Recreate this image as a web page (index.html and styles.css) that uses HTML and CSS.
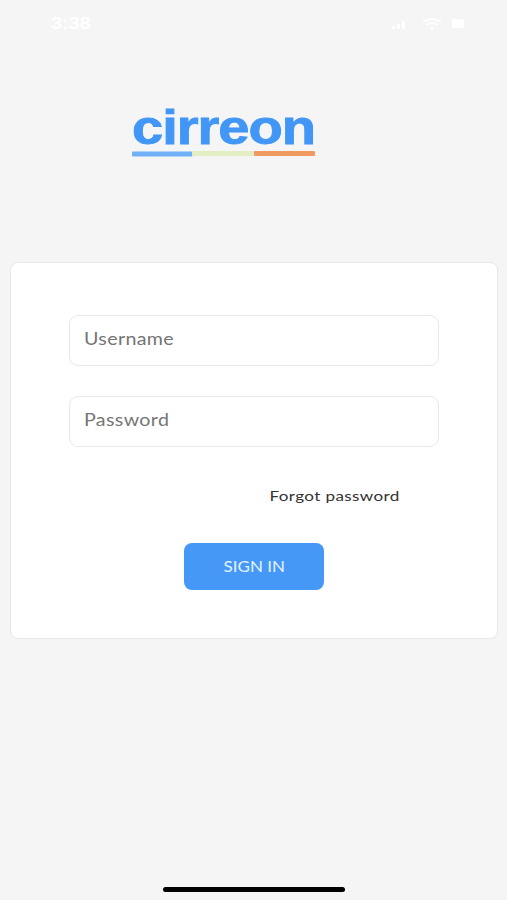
FILE: index.html
```html
<!DOCTYPE html>
<html lang="en">
<head>
    <meta charset="UTF-8">
    <meta name="viewport" content="width=device-width, initial-scale=1.0">
    <title>Cirreon Login</title>
    <link rel="stylesheet" href="styles.css">
</head>
<body>

    <!-- Status Bar -->
    <header class="status-bar">
        <span class="time">3:38</span>
        <svg class="status-icons" width="76" height="16" viewBox="0 0 76 16">
            <rect x="1" y="10" width="3" height="3"/>
            <rect x="6" y="8" width="3" height="5"/>
            <rect x="11" y="5" width="3" height="8"/>
            <path class="wifi" d="M32 6Q41 0 50 6M35 9Q41 5 47 9"/>
            <circle cx="41" cy="12" r="1.5"/>
            <rect x="61" y="3" width="12" height="9" rx="1.5"/>
        </svg>
    </header>

    <!-- Logo -->
    <div class="logo">
        <svg width="183" height="52" viewBox="0 0 183 52">
            <text class="logo-text" x="0" y="37" textLength="183" lengthAdjust="spacingAndGlyphs">cirreon</text>
            <rect x="0" y="44.5" width="61" height="5" rx="1" fill="#6fb0f6"/>
            <rect x="60" y="44" width="62" height="5" fill="#e3efc2"/>
            <rect x="122" y="44" width="61" height="5" rx="1" fill="#f19a5f"/>
        </svg>
    </div>

    <!-- Login Form -->
    <form class="login-card">
        <div class="field">
            <input type="text" placeholder="Username" aria-label="Username">
        </div>
        <div class="field">
            <input type="password" placeholder="Password" aria-label="Password">
        </div>
        <a class="forgot" href="#">Forgot password</a>
        <button type="submit"><span>SIGN IN</span></button>
    </form>

    <div class="home-indicator"></div>

</body>
</html>
```
FILE: styles.css
```css
* {
    box-sizing: border-box;
}

body {
    display: flex;
    flex-direction: column;
    height: 900px;
    margin: 0;
    padding: 0;
    overflow: hidden;
    font-family: Lato, "Open Sans", sans-serif;
    background-color: #f5f5f5;
}

.status-bar {
    display: flex;
    justify-content: space-between;
    align-items: center;
    height: 48px;
    padding: 0 40px 0 51px;
    color: #fff;
}

.time {
    font: bold 16px "Liberation Sans", sans-serif;
    transform: scaleX(1.24);
    transform-origin: left;
}

.status-icons {
    fill: #fff;
}

.wifi {
    fill: none;
    stroke: #fff;
    stroke-width: 2;
}

.logo {
    height: 214px;
    padding: 59px 0 0 132px;
}

.logo svg {
    display: block;
    overflow: visible;
}

.logo-text {
    font: bold 49px "Liberation Sans", sans-serif;
    letter-spacing: -0.9px;
    fill: #4296f5;
    stroke: #4296f5;
    stroke-width: 0.9;
}

.login-card {
    display: flex;
    flex-direction: column;
    align-items: center;
    width: 488px;
    height: 377px;
    margin-left: 10px;
    padding-top: 52px;
    background-color: #fff;
    border: 1.5px solid #e8e8e8;
    border-radius: 8px;
}

.field {
    width: 370px;
    height: 51px;
    margin-bottom: 30px;
    padding: 1px 14px 5px;
    border: 1.5px solid #e8e8e8;
    border-radius: 9px;
}

input {
    width: 285px;
    height: 100%;
    padding: 0;
    border: none;
    outline: none;
    background: none;
    font: 16.5px Lato, "Open Sans", sans-serif;
    letter-spacing: 0.3px;
    color: #333;
    transform: scaleX(1.19);
    transform-origin: left;
}

input::placeholder {
    color: #757575;
    opacity: 1;
}

.forgot {
    align-self: flex-end;
    margin: 9px 97px 0 0;
    font-size: 14px;
    line-height: 20px;
    letter-spacing: 0.3px;
    color: #333;
    text-decoration: none;
    transform: scaleX(1.22);
    transform-origin: right;
}

button {
    width: 140px;
    height: 47px;
    margin-top: 37px;
    padding: 0;
    border: none;
    border-radius: 8px;
    background-color: #4698f7;
    font: 14.5px Lato, "Open Sans", sans-serif;
    color: #e4f2ff;
    cursor: pointer;
}

button span {
    display: inline-block;
    transform: scaleX(1.17);
}

.home-indicator {
    width: 182px;
    height: 5px;
    margin: auto 0 8px 163px;
    border-radius: 3px;
    background-color: #000;
}
```
